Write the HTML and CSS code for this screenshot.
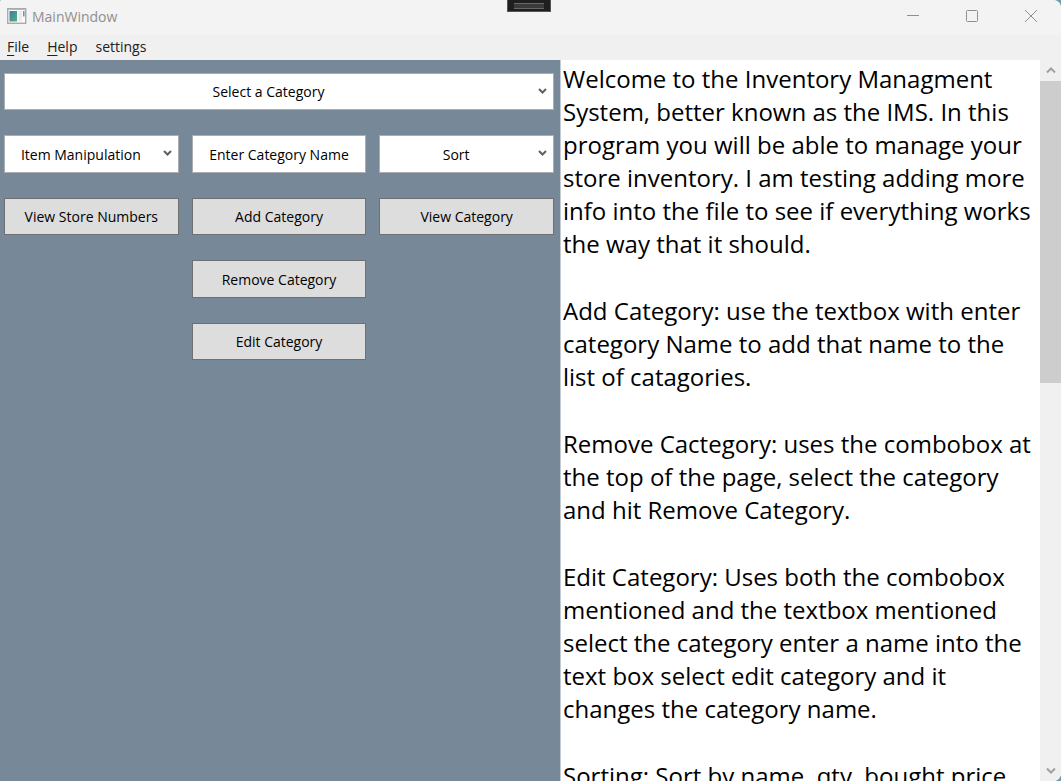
FILE: index.html
```html
<!DOCTYPE html>
<html lang="en">
<head>
<meta charset="utf-8">
<title>MainWindow</title>
<link rel="stylesheet" href="styles.css">
</head>
<body>
<div class="window">
  <header class="titlebar">
    <svg class="app-icon" width="20" height="16" viewBox="0 0 20 16" aria-hidden="true">
      <defs><linearGradient id="pane" x1="0" y1="0" x2="1" y2="1"><stop offset="0" stop-color="#3d79a8"/><stop offset="1" stop-color="#58b07c"/></linearGradient></defs>
      <rect x=".75" y=".75" width="18" height="14.5" fill="#fafafa" stroke="#989ca6" stroke-width="1.2"/>
      <path d="M1 1.5h17.5" stroke="#b4b8c0"/>
      <rect x="2.5" y="3" width="7.5" height="10.5" fill="url(#pane)"/>
      <rect x="11.5" y="3" width="3.5" height="10.5" fill="#e9ebec"/>
      <path d="M16.8 3v5.5" stroke="#4d93a0" stroke-width="1.4"/>
    </svg>
    <span class="title">MainWindow</span>
    <div class="debug-tab"></div>
    <div class="window-buttons">
      <button type="button" aria-label="Minimize"><svg width="14" height="14" viewBox="0 0 14 14"><path d="M1 6.5h12"/></svg></button>
      <button type="button" aria-label="Maximize"><svg width="14" height="14" viewBox="0 0 14 14"><rect x="1.5" y="1.5" width="11" height="11" rx="1"/></svg></button>
      <button type="button" aria-label="Close"><svg width="14" height="14" viewBox="0 0 14 14"><path d="M1 1l12 12M13 1L1 13"/></svg></button>
    </div>
  </header>
  <nav class="menubar">
    <button type="button"><u>F</u>ile</button>
    <button type="button"><u>H</u>elp</button>
    <button type="button">settings</button>
  </nav>
  <main class="content">
    <section class="controls">
      <div class="combo wide">
        <select aria-label="Category"><option>Select a Category</option></select>
        <svg class="arrow" width="9" height="6" viewBox="0 0 9 6"><path d="M1 1l3.5 3.5L8 1"/></svg>
      </div>
      <div class="combo">
        <select aria-label="Item manipulation"><option>Item Manipulation</option></select>
        <svg class="arrow" width="9" height="6" viewBox="0 0 9 6"><path d="M1 1l3.5 3.5L8 1"/></svg>
      </div>
      <input class="field" type="text" aria-label="Category name" value="Enter Category Name">
      <div class="combo">
        <select aria-label="Sort"><option>Sort</option></select>
        <svg class="arrow" width="9" height="6" viewBox="0 0 9 6"><path d="M1 1l3.5 3.5L8 1"/></svg>
      </div>
      <button class="action" type="button">View Store Numbers</button>
      <button class="action" type="button">Add Category</button>
      <button class="action" type="button">View Category</button>
      <button class="action middle" type="button">Remove Category</button>
      <button class="action middle" type="button">Edit Category</button>
    </section>
    <section class="reader">
      <div class="text">
        <p>Welcome to the Inventory Managment System, better known as the IMS. In this program you will be able to manage your store inventory. I am testing adding more info into the file to see if everything works the way that it should.</p>
        <p>Add Category: use the textbox with enter category Name to add that name to the list of catagories.</p>
        <p>Remove Cactegory: uses the combobox at the top of the page, select the category and hit Remove Category.</p>
        <p>Edit Category: Uses both the combobox mentioned and the textbox mentioned select the category enter a name into the text box select edit category and it changes the category name.</p>
        <p>Sorting: Sort by name, qty, bought price</p>
      </div>
      <div class="scrollbar">
        <button type="button" aria-label="Scroll up"><svg width="10" height="7" viewBox="0 0 10 7"><path d="M1 5.5l4-4 4 4"/></svg></button>
        <div class="track"><div class="thumb"></div></div>
        <button type="button" aria-label="Scroll down"><svg width="10" height="7" viewBox="0 0 10 7"><path d="M1 1.5l4 4 4-4"/></svg></button>
      </div>
    </section>
  </main>
</div>
</body>
</html>
```
FILE: styles.css
```css
* { box-sizing: border-box; }
body { margin: 0; font-family: "Open Sans", "Noto Sans", sans-serif; font-size: 14px; color: #000; background: #6f9dab; }
button, select, input { font: inherit; color: inherit; margin: 0; }
svg { fill: none; display: block; }
.window { display: flex; flex-direction: column; height: 100vh; overflow: hidden; background: #f0f0f0; border-radius: 2px 8px 8px 0; }

.titlebar { position: relative; display: flex; align-items: center; height: 35px; padding: 0 1px 3px 7px; background: #f3f3f3; color: #8f8f8f; }
.title { margin-left: 5px; }
.debug-tab { position: absolute; top: 0; left: 507px; width: 44px; height: 12px; background: #1f1f1f; border: 1px solid #555; border-top: 0; }
.debug-tab::before { content: ""; display: block; height: 4px; margin: 3px 6px; background: #3a3a3a; border: solid #686868; border-width: 1px 0; }
.window-buttons { display: flex; margin-left: auto; }
.window-buttons button { display: flex; align-items: center; justify-content: center; width: 59px; height: 32px; padding: 0; border: 0; background: none; }
.window-buttons svg { stroke: #8f8f8f; }

.menubar { display: flex; gap: 18px; height: 25px; padding: 0 7px 2px; color: #212121; }
.menubar button { padding: 0; border: 0; background: none; }
.menubar u { text-underline-offset: 3px; }

.content { flex: 1; min-height: 0; display: grid; grid-template-columns: minmax(0, 560fr) minmax(0, 501fr); grid-template-rows: minmax(0, 1fr); }
.controls { display: grid; grid-template-columns: repeat(3, minmax(0, 1fr)); grid-template-rows: 37px 38px 37px 38px 37px; gap: 25px 13px; align-content: start; padding: 13px 6px 0 4px; background: #778899; }
.wide { grid-column: 1 / -1; }
.middle { grid-column: 2; }
.combo { position: relative; display: flex; }
.combo select { appearance: none; width: 100%; border: 1px solid #abadb3; border-radius: 0; background: #fff; padding: 0 21px 0 0; text-align: center; text-align-last: center; }
.arrow { position: absolute; top: 15px; right: 7px; stroke: #606060; stroke-width: 2; pointer-events: none; }
.field { width: 100%; border: 1px solid #abadb3; padding: 0; text-align: center; background: #fff; }
.action { padding: 0; border: 1px solid #707070; background: #ddd; }

.reader { display: flex; border-left: 1px solid #c4cad2; background: #fff; }
.text { flex: 1; min-width: 0; overflow: hidden; padding: 2px 5px 0 2px; font-size: 24px; line-height: 33px; }
.text p { margin: 0 0 34px; }
.scrollbar { display: flex; flex-direction: column; width: 21px; background: #f0f0f0; }
.scrollbar button { display: flex; align-items: center; justify-content: center; height: 21px; padding: 0; border: 0; background: none; }
.scrollbar svg { stroke: #a0a0a0; stroke-width: 2; }
.track { flex: 1; }
.thumb { height: 44.5%; background: #cdcdcd; }
```
